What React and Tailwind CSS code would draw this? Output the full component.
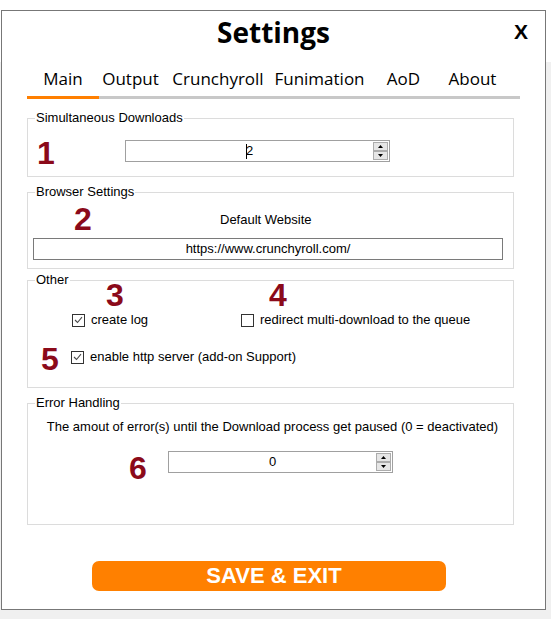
import React from "react";

const digit =
  "font-['Liberation_Sans',Arial,sans-serif] font-bold text-[32px] leading-[24px] text-[#8b0a1a] w-[18px] shrink-0";

function Check({ checked }) {
  return (
    <span className="w-[13px] h-[13px] border border-[#333333] bg-white flex items-center justify-center shrink-0">
      {checked && (
        <svg width="9" height="8" viewBox="0 0 9 8">
          <path d="M1 4 L3.5 6.5 L8 1.2" fill="none" stroke="#4a4a4a" strokeWidth="1.1" />
        </svg>
      )}
    </span>
  );
}

function SpinBtn({ up }) {
  return (
    <div className="w-[15px] h-[9px] bg-[#e6e6e6] border border-[#acacac] flex items-center justify-center">
      <svg width="5" height="3" viewBox="0 0 5 3">
        {up ? <path d="M0 3 L2.5 0 L5 3 Z" fill="#000" /> : <path d="M0 0 L2.5 3 L5 0 Z" fill="#000" />}
      </svg>
    </div>
  );
}

function Spin({ value, caret, className }) {
  return (
    <div className={"flex h-[22px] border border-[#a0a0a0] bg-white shrink-0 " + className}>
      <div className="flex-1 flex items-center justify-center text-[13px] leading-[16px]">
        {caret && <span className="inline-block w-px h-[15px] bg-black -mr-[1px]" />}
        {value}
      </div>
      <div className="flex flex-col my-[1px] mr-[1px]">
        <SpinBtn up />
        <SpinBtn />
      </div>
    </div>
  );
}

const tabs = [
  ["Main", "w-[72px] border-[#ff7f00]"],
  ["Output", "w-[63px] border-[#c8c8c8]"],
  ["Crunchyroll", "w-[112px] border-[#c8c8c8]"],
  ["Funimation", "w-[91px] border-[#c8c8c8]"],
  ["AoD", "w-[77px] border-[#c8c8c8]"],
  ["About", "w-[61px] border-[#c8c8c8]"],
];

export default function App() {
  return (
    <div className="w-[551px] h-[619px] overflow-hidden bg-[linear-gradient(to_bottom,#ffffff_62px,#f0f0f0_62px)] pt-[10px] pl-[1px]">
      <div className="w-[545px] h-[600px] border border-[#777777] bg-white flex flex-col text-black font-['Liberation_Sans',Arial,sans-serif]">
        {/* title */}
        <div className="grid grid-cols-[1fr_auto_1fr] items-center pt-[1px] mb-[16px]">
          <div />
          <div className="font-['Open_Sans',sans-serif] font-bold text-[28px] leading-[40px]">Settings</div>
          <div className="justify-self-end mr-[17px] font-['Liberation_Sans',Arial,sans-serif] font-bold text-[21px] leading-[24px]">
            X
          </div>
        </div>

        {/* tabs */}
        <div className="flex ml-[25px] font-['Open_Sans',sans-serif] text-[17px] leading-[22px]">
          {tabs.map(([t, c]) => (
            <div key={t} className={"h-[31px] border-b-[3px] text-center " + c}>
              {t}
            </div>
          ))}
          <div className="w-[17px] h-[31px] border-b-[3px] border-[#c8c8c8]" />
        </div>

        {/* Simultaneous Downloads */}
        <fieldset className="ml-[25px] w-[487px] mt-[11px] border border-[#dcdcdc]">
          <legend className="ml-[7px] px-[1px] text-[13px] leading-[16px]">Simultaneous Downloads</legend>
          <div className="flex items-start pt-[14px] pb-[11px] h-[25px] box-content">
            <div className={digit + " ml-[9px] mt-[1px] w-[88px]"}>1</div>
            <Spin value="2" caret className="w-[265px]" />
          </div>
        </fieldset>

        {/* Browser Settings */}
        <fieldset className="ml-[25px] w-[487px] mt-[7px] border border-[#dcdcdc]">
          <legend className="ml-[7px] px-[1px] text-[13px] leading-[16px]">Browser Settings</legend>
          <div className="pt-[7px] pb-[8px]">
            <div className="flex items-start h-[24px]">
              <div className={digit + " ml-[46px]"}>2</div>
              <div className="ml-[128px] mt-[5px] text-[13px] leading-[16px]">Default Website</div>
            </div>
            <div className="mt-[7px] ml-[5px] w-[470px] h-[22px] border border-[#7a7a7a] flex items-center justify-center text-[13px] leading-[16px]">
              https://www.crunchyroll.com/
            </div>
          </div>
        </fieldset>

        {/* Other */}
        <fieldset className="ml-[25px] w-[487px] mt-[3px] border border-[#dcdcdc]">
          <legend className="ml-[7px] px-[1px] text-[13px] leading-[16px]">Other</legend>
          <div className="pb-[16px]">
            <div className="flex items-start h-[24px] -mt-[5px]">
              <div className={digit + " ml-[78px]"}>3</div>
              <div className={digit + " ml-[145px]"}>4</div>
            </div>
            <div className="flex items-center h-[16px] mt-[5px] text-[13px] leading-[16px]">
              <div className="flex items-center gap-[6px] ml-[44px] w-[169px]">
                <Check checked />
                <span>create log</span>
              </div>
              <div className="flex items-center gap-[6px]">
                <Check />
                <span>redirect multi-download to the queue</span>
              </div>
            </div>
            <div className="flex items-start h-[24px] mt-[19px]">
              <div className={digit + " ml-[13px]"}>5</div>
              <div className="flex items-center gap-[6px] ml-[12px] mt-[2px] h-[16px] text-[13px] leading-[16px]">
                <Check checked />
                <span>enable http server (add-on Support)</span>
              </div>
            </div>
          </div>
        </fieldset>

        {/* Error Handling */}
        <fieldset className="ml-[25px] w-[487px] mt-[7px] border border-[#dcdcdc]">
          <legend className="ml-[7px] px-[1px] text-[13px] leading-[16px]">Error Handling</legend>
          <div className="pb-[44px]">
            <div className="mt-[8px] pl-[4px] text-center text-[13px] leading-[16px]">
              The amout of error(s) until the Download process get paused (0 = deactivated)
            </div>
            <div className="flex items-start mt-[16px] h-[29px]">
              <div className={digit + " ml-[101px] mt-[5px]"}>6</div>
              <Spin value="0" className="ml-[21px] w-[225px]" />
            </div>
          </div>
        </fieldset>

        {/* Save */}
        <button className="mt-[36px] ml-[90px] w-[354px] h-[30px] rounded-[7px] bg-[#ff8000] text-white font-bold text-[22px] leading-[30px] pl-[10px] font-['Liberation_Sans',Arial,sans-serif]">
          SAVE &amp; EXIT
        </button>
      </div>
    </div>
  );
}
